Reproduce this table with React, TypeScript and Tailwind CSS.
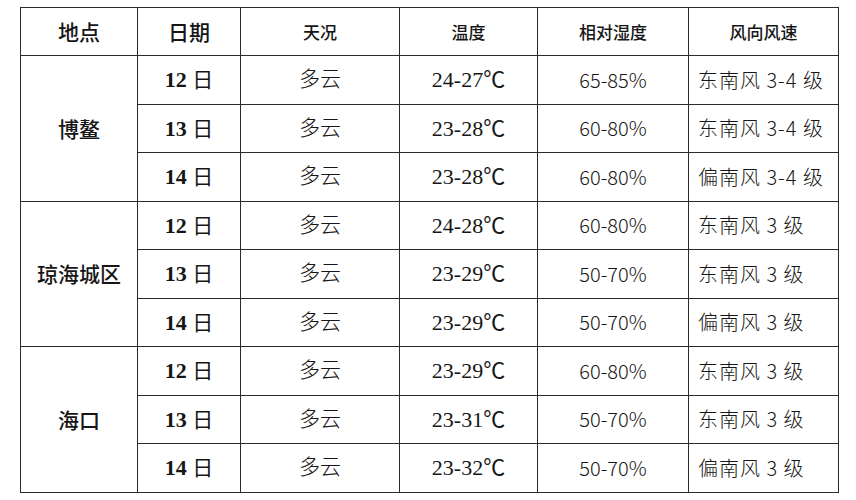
import React from 'react';

interface Row {
  date: string;
  sky: string;
  temp: string;
  hum: string;
  wind: string;
}

interface Place {
  name: string;
  rows: Row[];
}

const places: Place[] = [
  {
    name: '博鳌',
    rows: [
      { date: '12', sky: '多云', temp: '24-27℃', hum: '65-85%', wind: '东南风 3-4 级' },
      { date: '13', sky: '多云', temp: '23-28℃', hum: '60-80%', wind: '东南风 3-4 级' },
      { date: '14', sky: '多云', temp: '23-28℃', hum: '60-80%', wind: '偏南风 3-4 级' },
    ],
  },
  {
    name: '琼海城区',
    rows: [
      { date: '12', sky: '多云', temp: '24-28℃', hum: '60-80%', wind: '东南风 3 级' },
      { date: '13', sky: '多云', temp: '23-29℃', hum: '50-70%', wind: '东南风 3 级' },
      { date: '14', sky: '多云', temp: '23-29℃', hum: '50-70%', wind: '偏南风 3 级' },
    ],
  },
  {
    name: '海口',
    rows: [
      { date: '12', sky: '多云', temp: '23-29℃', hum: '60-80%', wind: '东南风 3 级' },
      { date: '13', sky: '多云', temp: '23-31℃', hum: '50-70%', wind: '东南风 3 级' },
      { date: '14', sky: '多云', temp: '23-32℃', hum: '50-70%', wind: '偏南风 3 级' },
    ],
  },
];

const serif = "font-['Liberation_Serif','Noto_Sans_CJK_SC',serif]";
const sans = "font-['Noto_Sans_CJK_SC',sans-serif]";
const cell = 'border border-[#2a2a2a] text-center align-middle p-0';

const App: React.FC = () => {
  return (
    <div className={`w-[856px] h-[500px] bg-white pt-[7px] pl-[20px] text-[#161616] ${serif}`}>
      <table className="border-collapse table-fixed w-[818px]">
        <colgroup>
          <col className="w-[117px]" />
          <col className="w-[103px]" />
          <col className="w-[159px]" />
          <col className="w-[138px]" />
          <col className="w-[151px]" />
          <col className="w-[150px]" />
        </colgroup>
        <thead>
          <tr className="h-[48px]">
            <th className={`${cell} ${sans} text-[21px] font-medium`}>地点</th>
            <th className={`${cell} ${sans} text-[21px] font-medium`}>日期</th>
            <th className={`${cell} ${sans} text-[17px] font-medium`}>天况</th>
            <th className={`${cell} ${sans} text-[17px] font-medium`}>温度</th>
            <th className={`${cell} ${sans} text-[17px] font-medium`}>相对湿度</th>
            <th className={`${cell} ${sans} text-[17px] font-medium`}>风向风速</th>
          </tr>
        </thead>
        <tbody>
          {places.map((place) =>
            place.rows.map((row, i) => (
              <tr key={place.name + row.date} className="h-[48.5px]">
                {i === 0 && (
                  <td rowSpan={3} className={`${cell} ${sans} text-[21px] font-medium`}>
                    {place.name}
                  </td>
                )}
                <td className={`${cell} text-[22px] font-bold`}>
                  {row.date} <span className={`${sans} font-normal text-[21px]`}>日</span>
                </td>
                <td className={`${cell} ${sans} text-[21px] font-light pb-[4px]`}>{row.sky}</td>
                <td className={`${cell} text-[22px]`}>{row.temp}</td>
                <td className={`${cell} ${sans} text-[20px] font-light`}>{row.hum}</td>
                <td className={`${cell} ${sans} text-[20px] font-light whitespace-nowrap text-left pl-[9px] tracking-[1px]`}>
                  {row.wind}
                </td>
              </tr>
            ))
          )}
        </tbody>
      </table>
    </div>
  );
};

export default App;
